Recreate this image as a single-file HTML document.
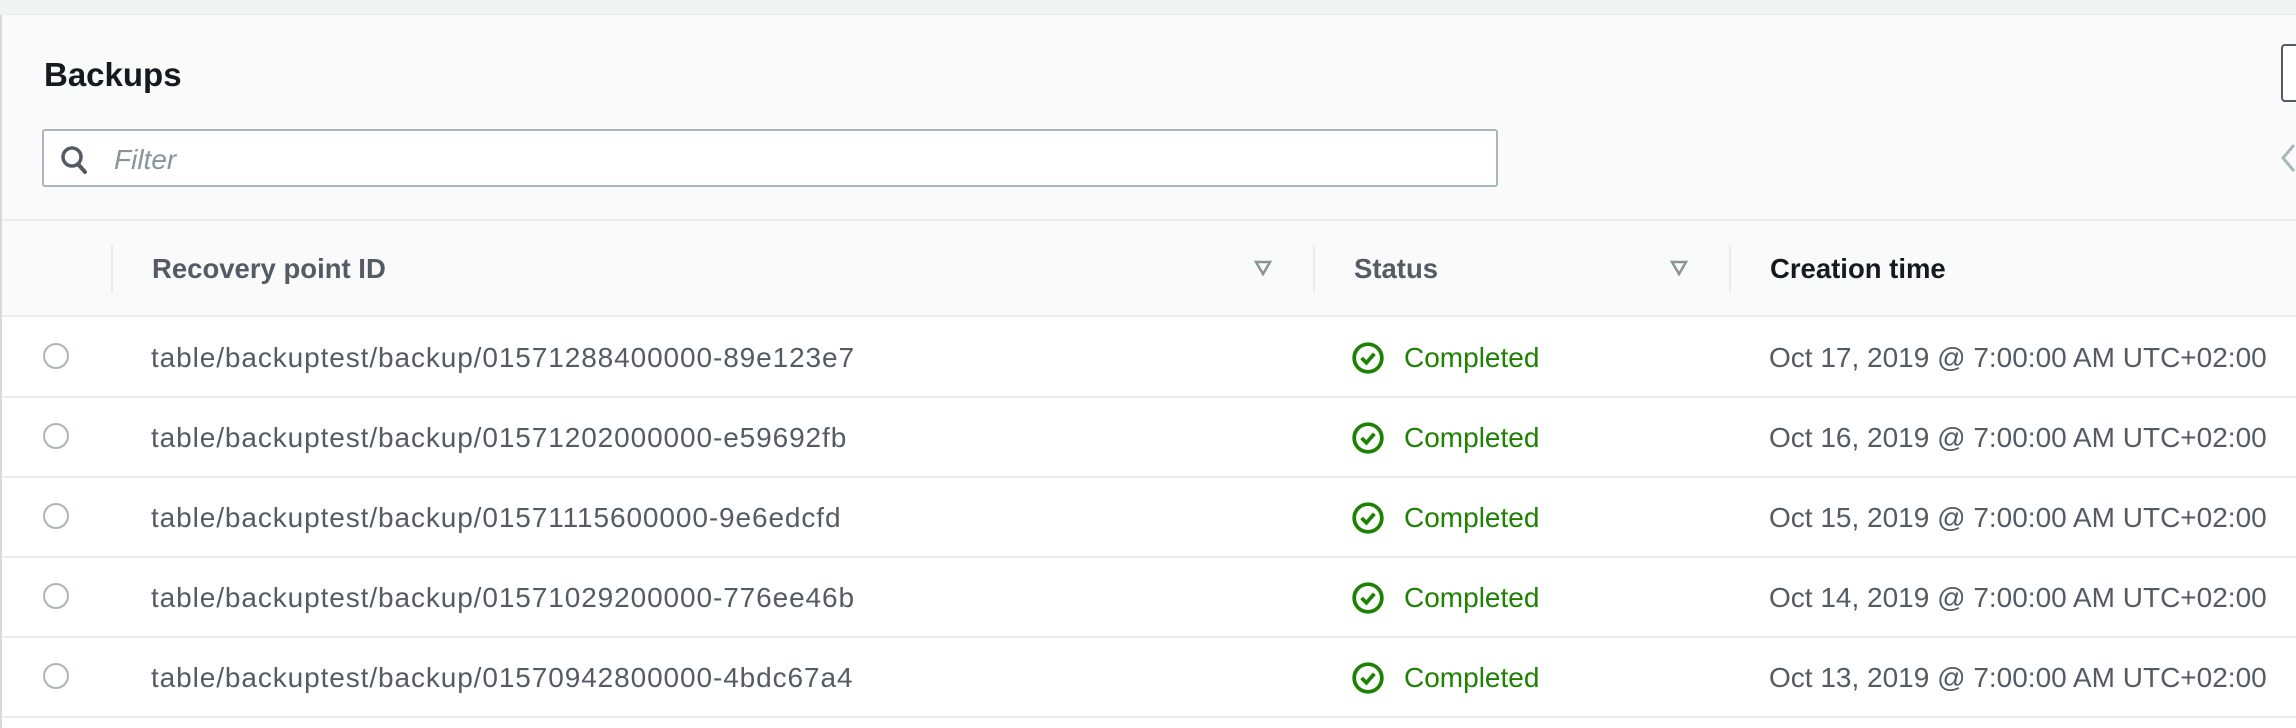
<!DOCTYPE html>
<html><head><meta charset="utf-8"><style>
*{box-sizing:border-box;margin:0;padding:0}
body{width:2296px;height:728px;overflow:hidden;background:#fff;font-family:"Liberation Sans",sans-serif;position:relative}
.top{position:absolute;left:0;top:0;width:2296px;height:15px;background:#f2f3f3;border-bottom:1px solid #eaeded}
.hdr{position:absolute;left:0;top:15px;width:2296px;height:301px;background:#fafafa;border-left:2px solid #d5dbdb}
.line{position:absolute;left:0;width:2296px;height:2px;background:#eaeded}
h1{position:absolute;left:44px;top:56px;font-size:33px;font-weight:bold;color:#16191f}
.filter{position:absolute;left:42px;top:129px;width:1456px;height:58px;background:#fff;border:2px solid #aab7b8;border-radius:3px}
.ph{position:absolute;left:70px;top:13px;font-size:28px;font-style:italic;color:#879596}
.sep{position:absolute;top:245px;width:2px;height:48px;background:#eaeded}
.ch{position:absolute;top:253px;font-size:27.5px;font-weight:bold;color:#545b64}
.tri{position:absolute;top:260px}
.row{position:absolute;left:0;width:2296px;height:80px}
.radio{position:absolute;left:43px;top:26px;width:26px;height:26px;border:2px solid #aab7b8;border-radius:50%}
.id{position:absolute;left:151px;top:25px;font-size:28px;letter-spacing:0.9px;color:#545b64;white-space:nowrap}
.ok{position:absolute;left:1351px;top:24px}
.st{position:absolute;left:1404px;top:25px;font-size:28px;color:#1d8102}
.dt{position:absolute;left:1769px;top:25px;font-size:28px;color:#545b64;white-space:nowrap}
</style></head><body>
<div class="top"></div>
<div class="hdr"></div>
<h1>Backups</h1>
<div class="filter">
<svg style="position:absolute;left:16px;top:14px" width="28" height="30" viewBox="0 0 28 30"><circle cx="12" cy="12" r="9" fill="none" stroke="#545b64" stroke-width="3.5"/><path d="M18 19 L25 27" stroke="#545b64" stroke-width="4" stroke-linecap="round"/></svg>
<div class="ph">Filter</div>
</div>
<div style="position:absolute;left:2281px;top:44px;width:30px;height:58px;border:2px solid #545b64;border-radius:4px;background:#fff"></div>
<svg style="position:absolute;left:2280px;top:142px" width="16" height="32" viewBox="0 0 16 32"><path d="M14 3 L3 16 L14 29" fill="none" stroke="#aab7b8" stroke-width="3"/></svg>
<div class="line" style="top:219px"></div>
<div class="sep" style="left:111px"></div>
<div class="ch" style="left:152px">Recovery point ID</div>
<svg class="tri" style="left:1254px" width="18" height="16" viewBox="0 0 18 16"><path d="M2 2 H16 L9 14 Z" fill="none" stroke="#879596" stroke-width="2.5"/></svg>
<div class="sep" style="left:1313px"></div>
<div class="ch" style="left:1354px">Status</div>
<svg class="tri" style="left:1670px" width="18" height="16" viewBox="0 0 18 16"><path d="M2 2 H16 L9 14 Z" fill="none" stroke="#879596" stroke-width="2.5"/></svg>
<div class="sep" style="left:1729px"></div>
<div class="ch" style="left:1770px;color:#16191f">Creation time</div>
<div class="line" style="top:315px"></div>

<div class="row" style="top:317px"><div class="radio"></div><div class="id">table/backuptest/backup/01571288400000-89e123e7</div><svg class="ok" width="34" height="34" viewBox="0 0 32 32"><circle cx="16" cy="16" r="13" fill="none" stroke="#1d8102" stroke-width="3.5"/><path d="M10 16 L14.5 20.5 L22 12" fill="none" stroke="#1d8102" stroke-width="3.5"/></svg><div class="st">Completed</div><div class="dt">Oct 17, 2019 @ 7:00:00 AM UTC+02:00</div></div>
<div class="line" style="top:396px"></div>
<div class="row" style="top:397px"><div class="radio"></div><div class="id">table/backuptest/backup/01571202000000-e59692fb</div><svg class="ok" width="34" height="34" viewBox="0 0 32 32"><circle cx="16" cy="16" r="13" fill="none" stroke="#1d8102" stroke-width="3.5"/><path d="M10 16 L14.5 20.5 L22 12" fill="none" stroke="#1d8102" stroke-width="3.5"/></svg><div class="st">Completed</div><div class="dt">Oct 16, 2019 @ 7:00:00 AM UTC+02:00</div></div>
<div class="line" style="top:476px"></div>
<div class="row" style="top:477px"><div class="radio"></div><div class="id">table/backuptest/backup/01571115600000-9e6edcfd</div><svg class="ok" width="34" height="34" viewBox="0 0 32 32"><circle cx="16" cy="16" r="13" fill="none" stroke="#1d8102" stroke-width="3.5"/><path d="M10 16 L14.5 20.5 L22 12" fill="none" stroke="#1d8102" stroke-width="3.5"/></svg><div class="st">Completed</div><div class="dt">Oct 15, 2019 @ 7:00:00 AM UTC+02:00</div></div>
<div class="line" style="top:556px"></div>
<div class="row" style="top:557px"><div class="radio"></div><div class="id">table/backuptest/backup/01571029200000-776ee46b</div><svg class="ok" width="34" height="34" viewBox="0 0 32 32"><circle cx="16" cy="16" r="13" fill="none" stroke="#1d8102" stroke-width="3.5"/><path d="M10 16 L14.5 20.5 L22 12" fill="none" stroke="#1d8102" stroke-width="3.5"/></svg><div class="st">Completed</div><div class="dt">Oct 14, 2019 @ 7:00:00 AM UTC+02:00</div></div>
<div class="line" style="top:636px"></div>
<div class="row" style="top:637px"><div class="radio"></div><div class="id">table/backuptest/backup/01570942800000-4bdc67a4</div><svg class="ok" width="34" height="34" viewBox="0 0 32 32"><circle cx="16" cy="16" r="13" fill="none" stroke="#1d8102" stroke-width="3.5"/><path d="M10 16 L14.5 20.5 L22 12" fill="none" stroke="#1d8102" stroke-width="3.5"/></svg><div class="st">Completed</div><div class="dt">Oct 13, 2019 @ 7:00:00 AM UTC+02:00</div></div>
<div class="line" style="top:716px"></div>
<div style="position:absolute;left:0;top:15px;width:2px;height:713px;background:#d5dbdb"></div>
</body></html>
